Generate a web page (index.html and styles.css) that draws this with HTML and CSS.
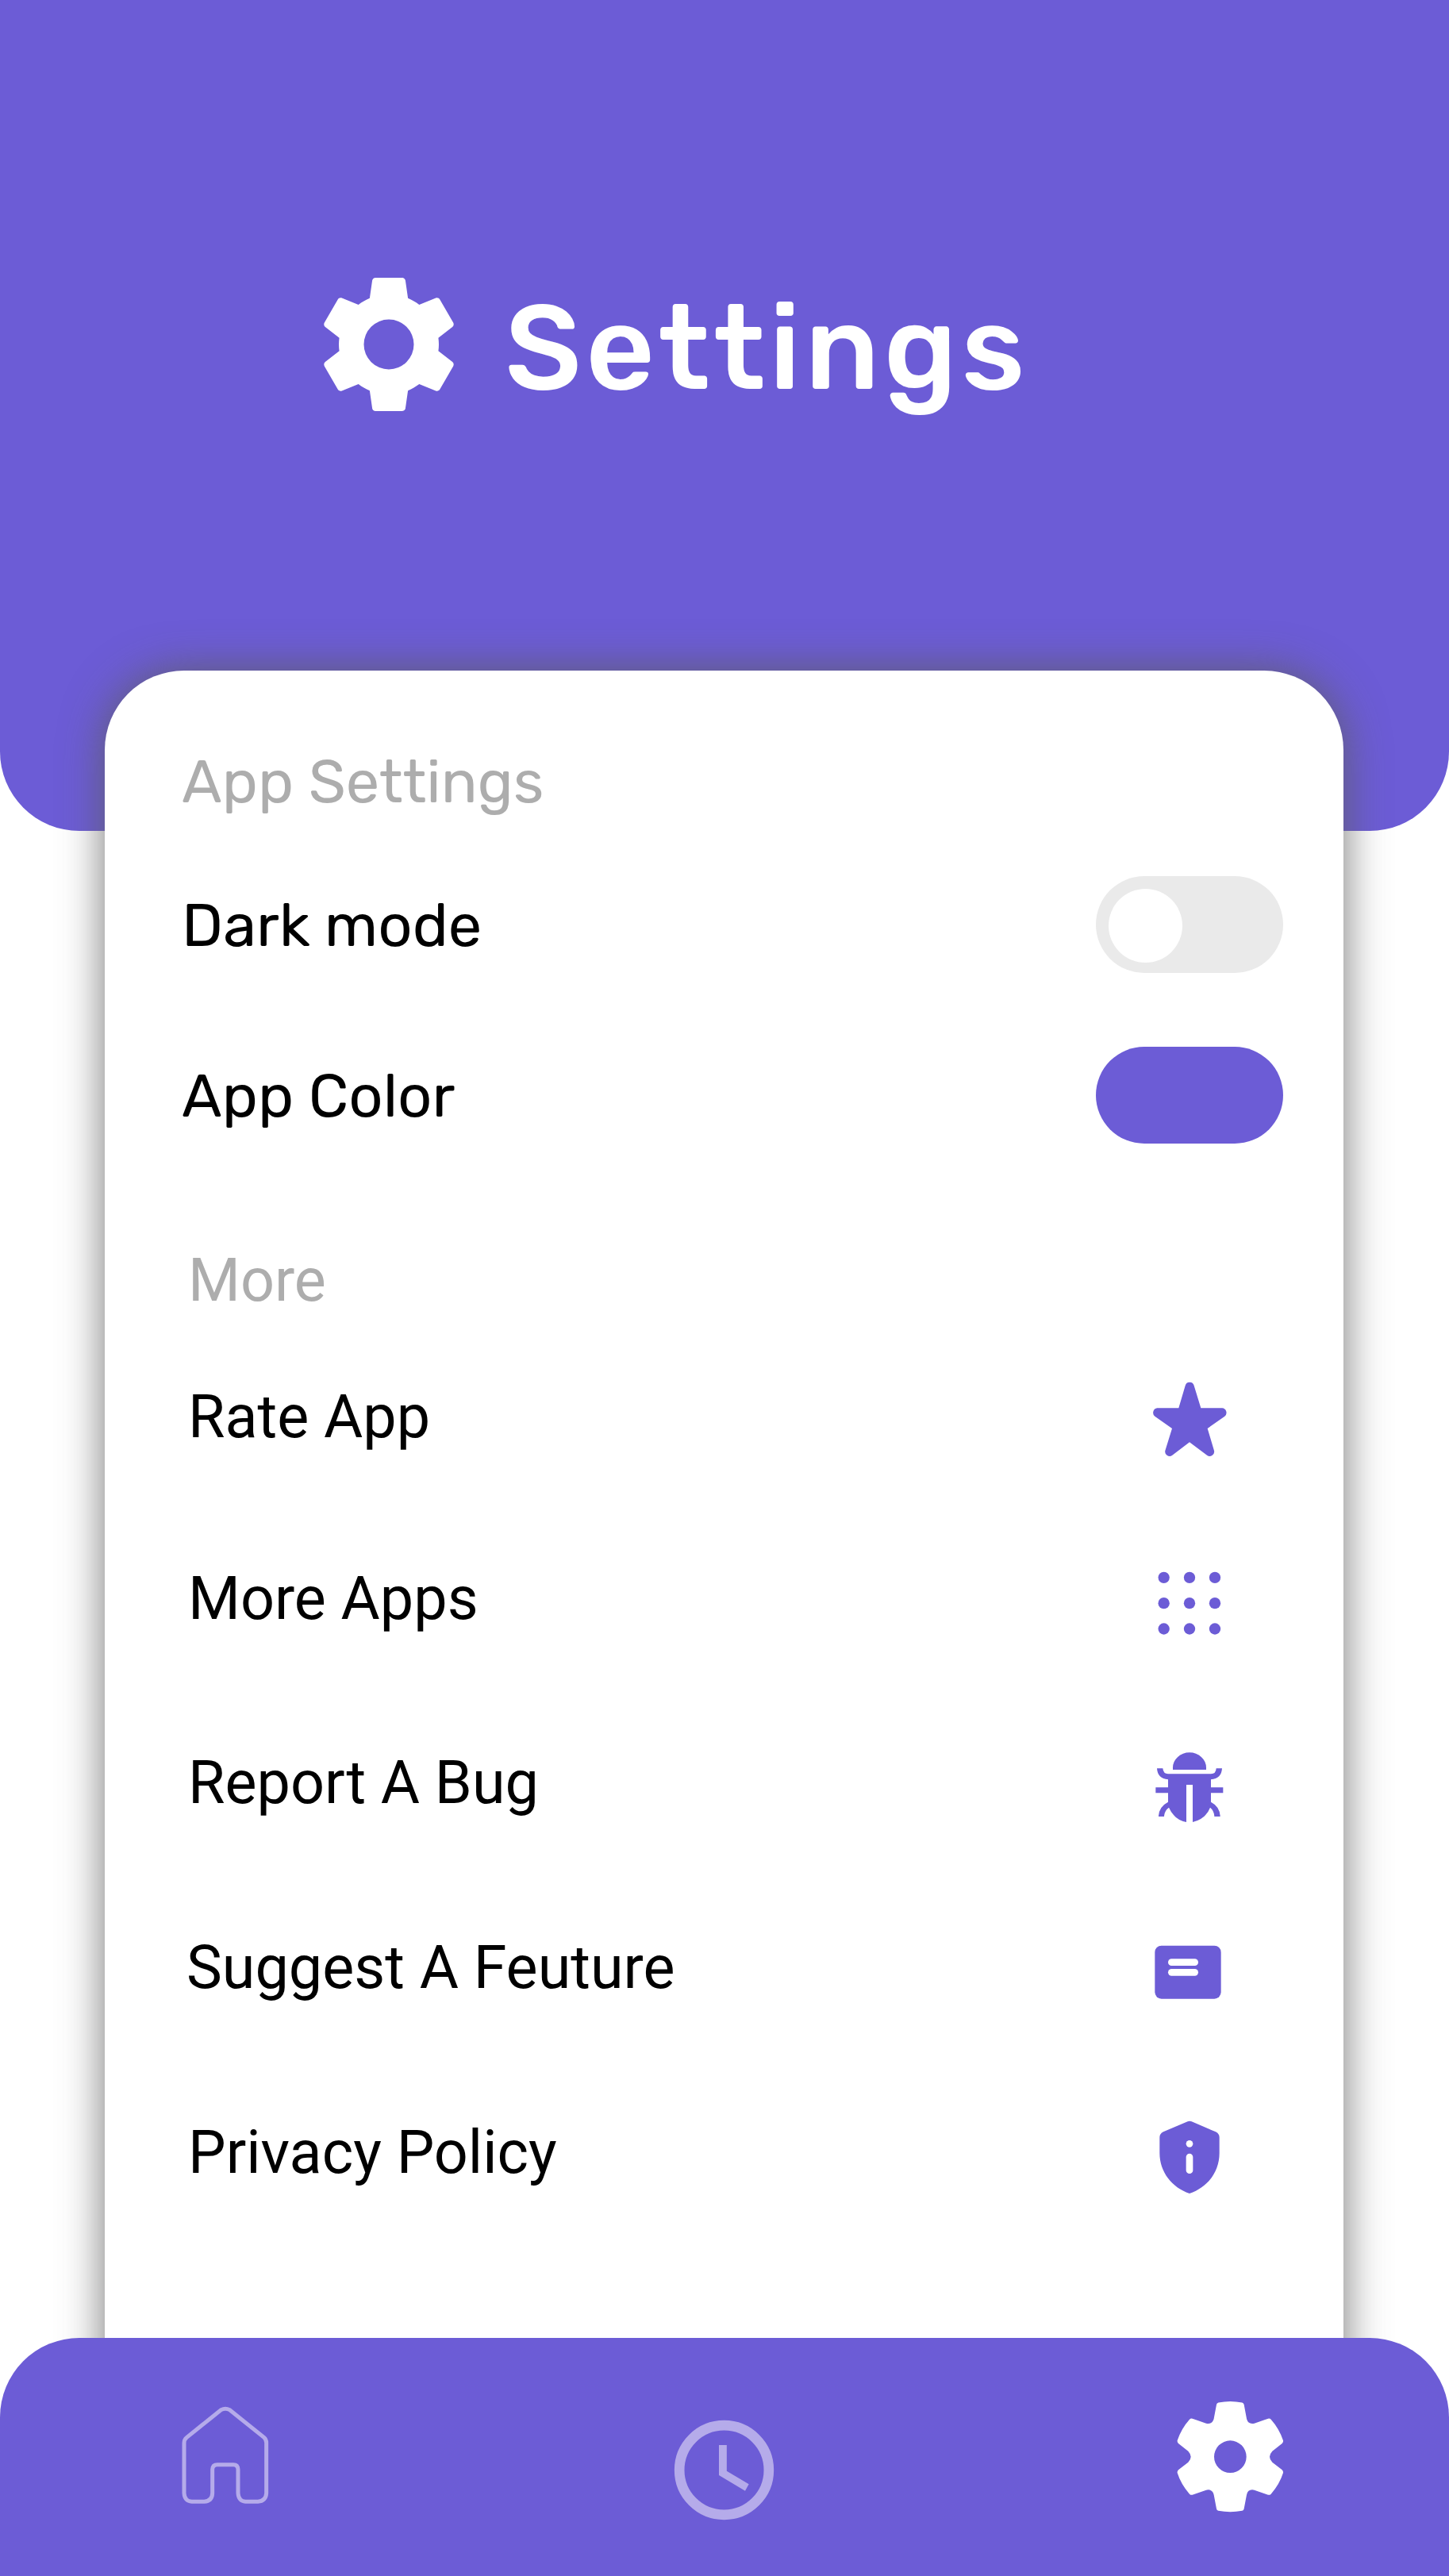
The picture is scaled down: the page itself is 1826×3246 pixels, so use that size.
FILE: index.html
```
<!DOCTYPE html>
<html lang="en">
<head>
<meta charset="utf-8">
<title>Settings</title>
<link rel="stylesheet" href="styles.css">
</head>
<body>
<header class="header">
  <svg class="header-icon" viewBox="2 2 20 20" aria-hidden="true"><path fill-rule="evenodd" d="M19.43 12.98c.04-.32.07-.64.07-.98s-.03-.66-.07-.98l2.11-1.65c.19-.15.24-.42.12-.64l-2-3.46c-.12-.22-.39-.3-.61-.22l-2.49 1c-.52-.4-1.08-.73-1.69-.98l-.38-2.65C14.46 2.18 14.25 2 14 2h-4c-.25 0-.46.18-.49.42l-.38 2.65c-.61.25-1.17.59-1.69.98l-2.49-1c-.23-.09-.49 0-.61.22l-2 3.46c-.13.22-.07.49.12.64l2.11 1.65c-.04.32-.07.65-.07.98s.03.66.07.98l-2.11 1.65c-.19.15-.24.42-.12.64l2 3.46c.12.22.39.3.61.22l2.49-1c.52.4 1.08.73 1.69.98l.38 2.65c.03.24.24.42.49.42h4c.25 0 .46-.18.49-.42l.38-2.65c.61-.25 1.17-.59 1.69-.98l2.49 1c.23.09.49 0 .61-.22l2-3.46c.12-.22.07-.49-.12-.64l-2.11-1.65zM12 15.75a3.75 3.75 0 1 1 0-7.5a3.75 3.75 0 0 1 0 7.5z"/></svg>
  <h1 class="title">Settings</h1>
</header>

<main class="card">
  <h2 class="heading heading-app">App Settings</h2>
  <div class="row row-app">
    <span class="label">Dark mode</span>
    <span class="toggle" role="switch" aria-checked="false"><span class="knob"></span></span>
  </div>
  <div class="row row-app">
    <span class="label">App Color</span>
    <span class="swatch"></span>
  </div>

  <h2 class="heading heading-more">More</h2>
  <div class="row row-more row-first">
    <span class="label">Rate App</span>
    <svg class="icon" viewBox="0 -12 480 450"><path d="M221 78A17 17 0 0 1 254 78L280 163H360A17.500 17.500 0 0 1 370 194L305 240L330 324A17 17 0 0 1 303 341L237 292L172 341A17 17 0 0 1 145 324L171 240L106 194A17.500 17.500 0 0 1 115 163H196Z"/></svg>
  </div>
  <div class="row row-more row-second">
    <span class="label">More Apps</span>
    <svg class="icon" viewBox="0 673.5 480 450"><circle cx="140" cy="802" r="21.500"/><circle cx="237" cy="802" r="21.500"/><circle cx="333" cy="802" r="21.500"/><circle cx="140" cy="899" r="21.500"/><circle cx="237" cy="899" r="21.500"/><circle cx="333" cy="899" r="21.500"/><circle cx="140" cy="996" r="21.500"/><circle cx="237" cy="996" r="21.500"/><circle cx="333" cy="996" r="21.500"/></svg>
  </div>
  <div class="row row-more">
    <span class="label">Report A Bug</span>
    <svg class="icon" viewBox="0 -9 480 450"><path d="M174 150V142A63 57 0 0 1 300 142V150Z"/><path d="M114 145H136Q138 166 156 166H318Q337 166 338 145H360Q358 184 318 187V217H364V238H318V272Q352 290 353 327H331Q330 305 315 293Q298 337 249 348V207H225V348Q180 340 159 293Q142 305 141 327H120Q121 290 156 272V238H109V217H156V187Q116 184 114 145Z"/></svg>
  </div>
  <div class="row row-more row-suggest">
    <span class="label">Suggest A Feuture</span>
    <svg class="icon" viewBox="0 690 480 450"><rect x="106" y="815" width="250" height="201" rx="25"/><g class="cutout"><rect x="156" y="865" width="114" height="26" rx="13"/><rect x="156" y="903" width="114" height="26" rx="13"/></g></svg>
  </div>
  <div class="row row-more">
    <span class="label">Privacy Policy</span>
    <svg class="icon" viewBox="0 9 480 450"><path d="M230 100Q237 97 245 100L336 139Q350 146 350 160V220C350 290 305 350 237 372C170 350 124 290 124 220V160Q124 146 138 139Z"/><g class="cutout"><circle cx="237" cy="184" r="13"/><rect x="224" y="221" width="26" height="76" rx="13"/></g></svg>
  </div>
</main>

<nav class="nav">
  <svg class="nav-icon home" viewBox="0 0 540 570"><path d="M236 110Q252 101 268 110L398 214Q407 222 407 234V425Q405 455 375 457H328Q302 455 300 425V335Q299 317 283 317H221Q204 317 203 335V425Q202 455 172 457H125Q98 455 96 425V236Q96 222 106 214Z"/></svg>
  <svg class="nav-icon clock" viewBox="30 0 540 540"><circle cx="277.500" cy="277.500" r="169"/><path d="M258 183H287.500V281L371 331L357 356L258 297Z"/></svg>
  <svg class="nav-icon gear" viewBox="0 0 540 570"><path fill-rule="evenodd" d="M219 90Q220 84 226 82.500Q271 73 316 82.500Q322 84 323 90L333 143Q338 166 362 161L414 143Q420 141 425 146Q457 182 471 226Q472 232 467 237L430 266Q410 287 430 308L467 337Q472 342 471 348Q457 392 425 428Q420 433 414 431L362 413Q338 408 333 431L323 484Q322 490 316 491.500Q271 500 226 491.500Q220 490 219 484L209 431Q204 408 180 413L128 431Q122 433 117 428Q85 392 71 348Q70 342 75 337L112 308Q132 287 112 266L75 237Q70 232 71 226Q85 182 117 146Q122 141 128 143L180 161Q204 166 209 143ZM271 226A61 61 0 1 0 271 348A61 61 0 1 0 271 226Z"/></svg>
</nav>
</body>
</html>
```
FILE: styles.css
```
:root {
  --accent: #6c5cd6;
  --muted: #adadad;
}

* {
  box-sizing: border-box;
}

body {
  margin: 0;
  height: 3246px;
  display: flex;
  flex-direction: column;
  overflow: hidden;
  background: #fff;
  color: #000;
  font-family: Rubik, Roboto, sans-serif;
  font-size: 75.8px;
}

svg {
  display: block;
  flex: none;
}

.header {
  flex: none;
  height: 1047px;
  padding: 350px 0 0 406px;
  display: flex;
  align-items: flex-start;
  gap: 62px;
  background: var(--accent);
  border-radius: 0 0 100px 100px;
}

.header-icon {
  width: 168px;
  height: 168px;
  fill: #fff;
}

.title {
  margin: 5px 0 0;
  color: #fff;
  font-size: 151px;
  font-weight: 500;
  line-height: 168px;
  letter-spacing: 5px;
}

.card {
  flex: 1;
  margin: -202px 133px 0 132px;
  padding-top: 96px;
  background: #fff;
  border-radius: 100px 100px 0 0;
  box-shadow: 0 0 54px rgba(93, 93, 93, 0.86);
}

.heading {
  margin: 0;
  font-size: inherit;
  font-weight: 400;
  line-height: 88px;
  color: var(--muted);
}

.heading-app {
  padding-left: 97px;
  margin-bottom: 28px;
}

.heading-more {
  margin: 81px 0 15.5px;
  padding-left: 105px;
  font-family: Roboto, sans-serif;
  font-size: 75.5px;
}

.row {
  display: flex;
  align-items: center;
  justify-content: space-between;
}

.row-app {
  height: 215.5px;
  padding: 0 76px 0 97px;
}

.row-app .label {
  padding-top: 2px;
}

.row-more {
  height: 233px;
  padding: 0 113px 0 105px;
  font-family: Roboto, sans-serif;
  font-size: 75.5px;
}

.row-first {
  height: 225px;
}

.row-second {
  height: 232px;
}

.row-suggest {
  padding-left: 103px;
}

.label {
  line-height: 88px;
  white-space: nowrap;
}

.toggle,
.swatch {
  width: 236px;
  height: 122px;
  border-radius: 61px;
}

.toggle {
  display: flex;
  align-items: center;
  padding: 4px 0 0 16px;
  background: #eaeaea;
}

.knob {
  width: 93px;
  height: 93px;
  border-radius: 50%;
  background: #fff;
}

.swatch {
  background: var(--accent);
}

.icon {
  width: 160px;
  height: 150px;
  margin-top: 12px;
  fill: var(--accent);
}

.cutout {
  fill: #fff;
}

.nav {
  position: relative;
  z-index: 1;
  flex: none;
  height: 300px;
  margin-top: -100px;
  padding: 54px 186px 0 200px;
  display: flex;
  align-items: flex-start;
  justify-content: space-between;
  background: var(--accent);
  border-radius: 100px 100px 0 0;
}

.nav-icon {
  width: 180px;
  height: 190px;
}

.home {
  fill: none;
  stroke: #b5abea;
  stroke-width: 15;
}

.clock {
  height: 180px;
  margin-top: 20px;
  fill: #b5abea;
}

.clock circle {
  fill: none;
  stroke: #b5abea;
  stroke-width: 38;
}

.gear {
  fill: #fff;
}
```
